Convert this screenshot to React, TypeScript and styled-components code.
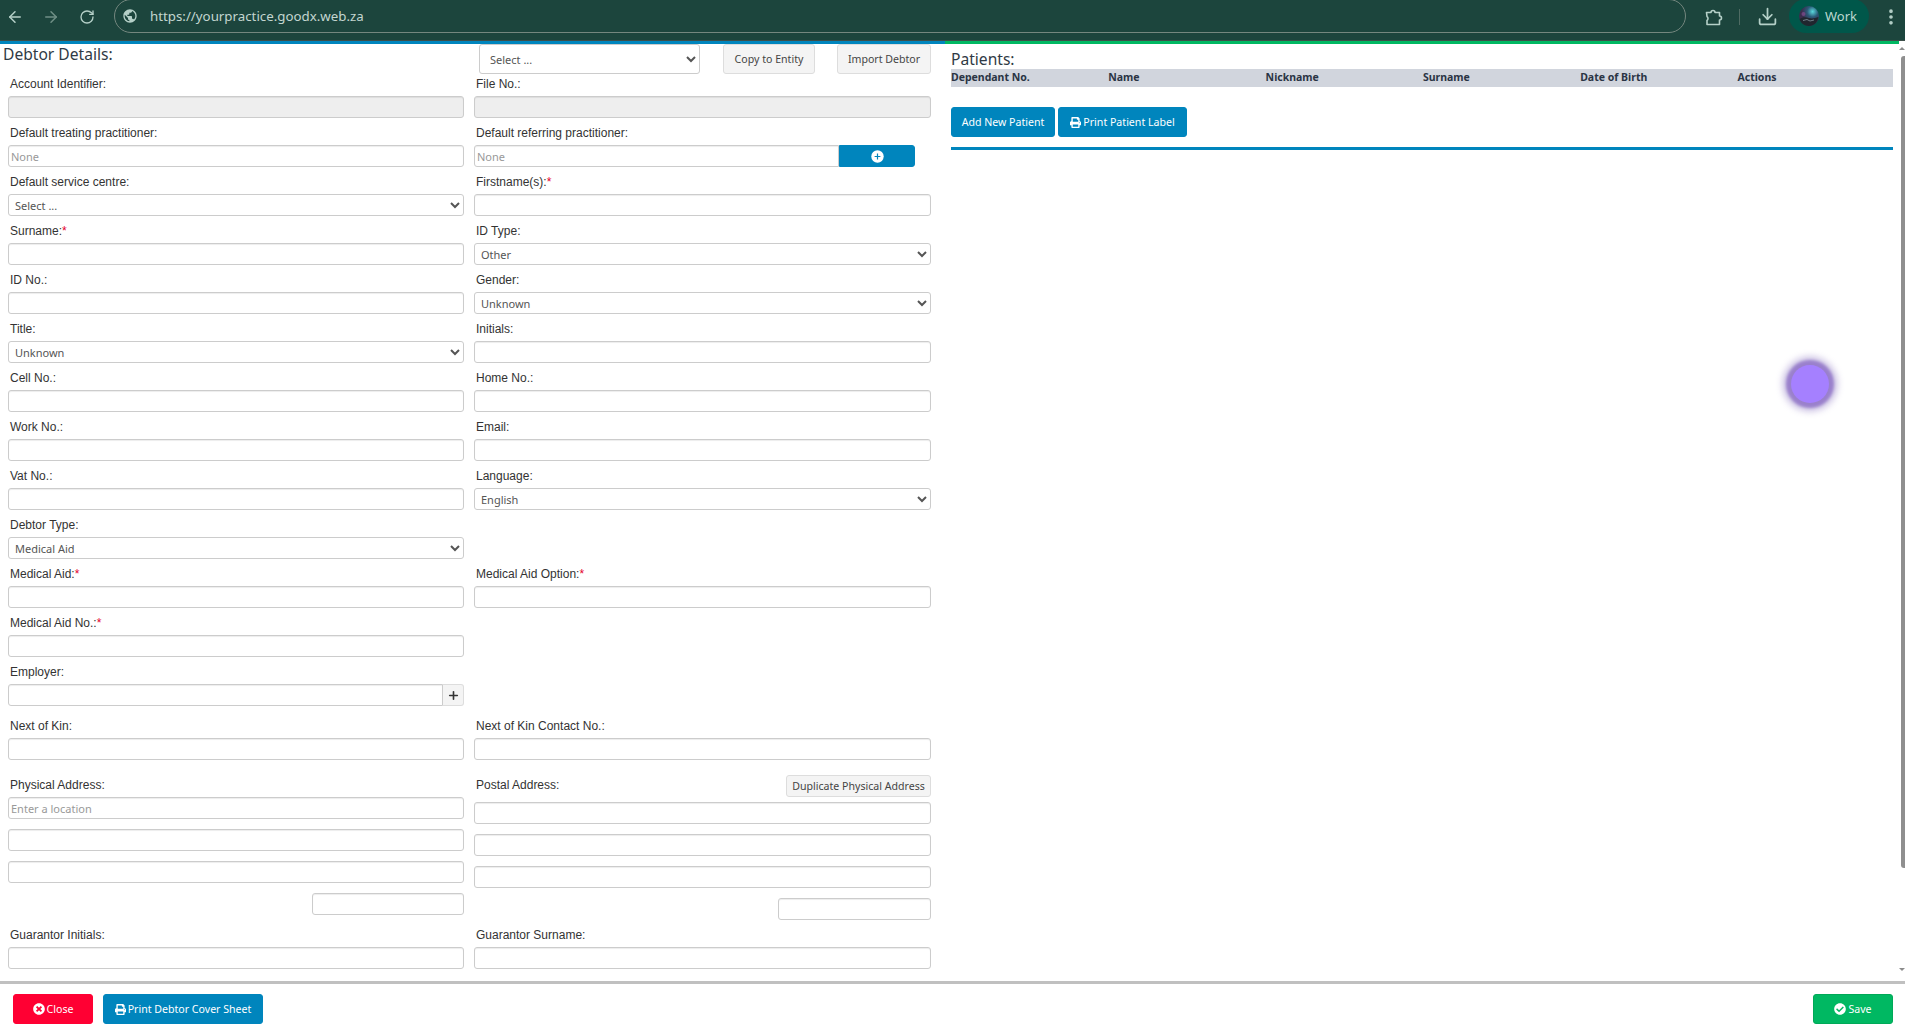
import React from 'react';
import styled, { createGlobalStyle } from 'styled-components';
import { ArrowLeft, ArrowRight, RotateCw, Download, EllipsisVertical, Plus } from 'lucide-react';
import { FaPrint, FaTimesCircle, FaCheckCircle } from 'react-icons/fa';
import { MdPublic } from 'react-icons/md';

const uiFont = `"Noto Sans", "Open Sans", sans-serif`;

const GlobalStyle = createGlobalStyle`
  html, body {
    margin: 0;
    height: 100%;
    overflow: hidden;
    background: #fff;
  }
  * {
    box-sizing: border-box;
  }
`;

const Page = styled.div`
  display: flex;
  flex-direction: column;
  height: 100vh;
  position: relative;
`;

const BrowserBar = styled.header`
  display: flex;
  align-items: flex-start;
  height: 41px;
  background: #1c453d;
  border-bottom: 1px solid #3d4f4a;
  color: #b5d0c8;
`;

const NavButton = styled.span<{ $dim?: boolean }>`
  display: flex;
  align-items: center;
  justify-content: center;
  width: 36px;
  height: 33px;
  color: ${(p) => (p.$dim ? '#6f8f86' : '#b5d0c8')};
  &:first-child {
    margin-left: -3px;
  }
`;

const Omnibox = styled.div`
  display: flex;
  align-items: center;
  width: 1572px;
  height: 34px;
  margin: -1px 9px 0 9px;
  padding-left: 7px;
  border: 1px solid #74877f;
  border-radius: 17px;
`;

const Url = styled.span`
  margin-left: 12px;
  font: 13.3px ${uiFont};
  color: #c3d6d0;
  white-space: nowrap;
`;

const ToolIcon = styled.span<{ $w: number }>`
  display: flex;
  align-items: center;
  justify-content: center;
  width: ${(p) => p.$w}px;
  height: 33px;
`;

const Divider = styled.span`
  width: 1px;
  height: 16px;
  margin: 9px 3px 0 8px;
  background: #4f6b63;
`;

const ProfilePill = styled.div`
  display: flex;
  align-items: center;
  gap: 6px;
  width: 80px;
  height: 34px;
  margin: -1px 9px 0 -2px;
  padding-left: 10px;
  border-radius: 17px;
  background: #00574a;
  font: 13px ${uiFont};
  color: #bcd8d0;
`;

const Main = styled.main`
  flex: 1;
  display: flex;
  min-height: 0;
`;

const LeftPanel = styled.section`
  width: 945px;
  padding-left: 8px;
  border-top: 3px solid #0085bd;
`;

const RightPanel = styled.section`
  width: 954px;
  padding: 5px 6px 0 6px;
  border-top: 3px solid #00b862;
`;

const TopRow = styled.div`
  display: flex;
  align-items: flex-start;
  height: 30px;
  margin-left: -5px;
`;

const Title = styled.h2`
  width: 476px;
  margin: 0;
  font: 400 15.6px/20px ${uiFont};
  color: #2f3a45;
`;

const Dropdown = styled.select<{ $wide?: boolean }>`
  width: ${(p) => (p.$wide ? '100%' : '221px')};
  height: ${(p) => (p.$wide ? '22px' : '30px')};
  margin: 0;
  padding: 0 0 0 ${(p) => (p.$wide ? '2px' : '6px')};
  border: 1px solid #ccc;
  border-radius: 3px;
  background: #fff;
  font: 11px ${uiFont};
  color: #555;
`;

const GreyButton = styled.button<{ $w: number; $h?: number; $left?: number }>`
  flex: none;
  width: ${(p) => p.$w}px;
  height: ${(p) => p.$h ?? 30}px;
  margin-left: ${(p) => p.$left ?? 0}px;
  padding: 0;
  border: 1px solid #ddd;
  border-radius: 3px;
  background: #f4f4f4;
  font: 10.6px ${uiFont};
  color: #444;
  white-space: nowrap;
`;

const TwoColumns = styled.div<{ $gapTop?: number }>`
  display: grid;
  grid-template-columns: 456px 457px;
  column-gap: 10px;
  margin-top: ${(p) => p.$gapTop ?? 0}px;
`;

const Field = styled.div`
  min-width: 0;
`;

const Label = styled.label<{ $first?: boolean }>`
  display: block;
  height: ${(p) => (p.$first ? 22 : 27)}px;
  padding: ${(p) => (p.$first ? '0' : '4px')} 0 0 2px;
  font: 12px/${(p) => (p.$first ? 21 : 23)}px "Liberation Sans", Arial, sans-serif;
  color: #333;
`;

const Required = styled.span`
  color: #e4002b;
`;

const TextInput = styled.input`
  display: block;
  width: 100%;
  height: 22px;
  padding: 0 2px;
  border: 1px solid #ccc;
  border-radius: 3px;
  background: #fff;
  box-shadow: inset 0 1px 1px rgba(0, 0, 0, 0.075);
  font: 11px ${uiFont};
  color: #555;
  &::placeholder {
    color: #999;
  }
  &:disabled {
    background: #eee;
  }
`;

const InputGroup = styled.div`
  display: flex;
`;

const GroupedInput = styled(TextInput)<{ $w?: number }>`
  flex: none;
  width: ${(p) => p.$w ?? 435}px;
  border-radius: 3px 0 0 3px;
`;

const PlusBlue = styled.button`
  width: 76px;
  height: 22px;
  padding: 0;
  border: 1px solid #0085bd;
  border-radius: 0 3px 3px 0;
  background: #0085bd;
  line-height: 0;
`;

const PlusGrey = styled.button`
  width: 21px;
  height: 22px;
  padding: 0;
  border: 1px solid #ddd;
  border-left: 0;
  border-radius: 0 3px 3px 0;
  background: #f4f4f4;
  color: #333;
  line-height: 0;
`;

const AddressStack = styled.div`
  display: flex;
  flex-direction: column;
  gap: 10px;
`;

const AddressHead = styled.div`
  display: flex;
  justify-content: space-between;
  align-items: flex-start;
  height: 22px;
  margin: 5px 0 -5px;
`;

const PostalLabel = styled(Label)`
  margin-top: -5px;
`;

const ZipInput = styled(TextInput)<{ $w: number }>`
  align-self: flex-end;
  width: ${(p) => p.$w}px;
`;

const ZeroGapLabel = styled(Label)`
  margin-bottom: -10px;
`;

const PanelTitle = styled.h2`
  margin: 0;
  font: 400 15.6px/20px ${uiFont};
  color: #2f3a45;
`;

const PatientHead = styled.div`
  display: grid;
  grid-template-columns: repeat(6, 157.3px);
  align-items: center;
  height: 18px;
  padding-bottom: 2px;
  background: #d1d5dd;
  font: 700 10.5px ${uiFont};
  color: #2a3444;
`;

const ButtonRow = styled.div`
  display: flex;
  gap: 3px;
  margin-top: 20px;
`;

const ActionButton = styled.button<{ $w: number; $bg: string; $edge?: string }>`
  display: flex;
  align-items: center;
  justify-content: center;
  gap: 2px;
  width: ${(p) => p.$w}px;
  height: 30px;
  padding: 0;
  border: 1px solid ${(p) => p.$edge ?? p.$bg};
  border-radius: 3px;
  background: ${(p) => p.$bg};
  font: 10.6px ${uiFont};
  color: #fff;
  white-space: nowrap;
`;

const BlueRule = styled.hr`
  height: 3px;
  margin: 10px 0 0;
  border: 0;
  background: #0085bd;
`;

const ScrollRail = styled.aside`
  flex: 1;
  display: flex;
  flex-direction: column;
  align-items: flex-end;
`;

const ArrowUp = styled.span`
  width: 0;
  height: 0;
  margin-top: 6px;
  border-left: 3px solid transparent;
  border-right: 3px solid transparent;
  border-bottom: 3px solid #8c8c8c;
`;

const Thumb = styled.span`
  width: 4px;
  height: 812px;
  margin-top: 6px;
  border-radius: 3px 0 0 3px;
  background: #8f8f8f;
`;

const ArrowDown = styled.span`
  width: 0;
  height: 0;
  margin-top: 100px;
  border-left: 3px solid transparent;
  border-right: 3px solid transparent;
  border-top: 3px solid #8c8c8c;
`;

const Footer = styled.footer`
  display: flex;
  align-items: flex-start;
  gap: 10px;
  height: 53px;
  padding: 10px 12px 0 13px;
  border-top: 3px solid #c0c0c0;
`;

const FooterSpacer = styled.div`
  flex: 1;
`;

const ClickDot = styled.div`
  position: absolute;
  left: 1791px;
  top: 365px;
  width: 38px;
  height: 38px;
  border-radius: 50%;
  background: #a580ff;
  box-shadow: 0 0 3px 5px #9a80cc, 0 0 6px 9px rgba(150, 130, 200, 0.45);
`;

const Avatar = () => (
  <svg width="20" height="20" viewBox="0 0 20 20">
    <defs>
      <radialGradient id="sky" cx="68%" cy="28%" r="55%">
        <stop offset="0%" stopColor="#58d8dc" />
        <stop offset="50%" stopColor="#2b5a78" />
        <stop offset="100%" stopColor="#3a2c4c" />
      </radialGradient>
    </defs>
    <circle cx="10" cy="10" r="10" fill="url(#sky)" />
    <circle cx="4.5" cy="8" r="2" fill="#7a4a88" opacity="0.8" />
    <path d="M.6 13c3-2 6-2 9.4-1s6 0 9.4-1c-.6 5-4.6 9-9.4 9s-8.400-3-9.400-7z" fill="#20262e" />
    <path d="M4 14.500l4-1 3 1.500 4-1" stroke="#6f7f88" strokeWidth="1" fill="none" />
  </svg>
);

const PuzzleIcon = () => (
  <svg width="20" height="20" viewBox="0 0 20 20" fill="none" stroke="currentColor" strokeWidth="1.600" strokeLinejoin="round">
    <path d="M3.500 5.500H8a2 2 0 0 1 4 0h4.500V9a2 2 0 0 1 0 4v4.500H4v-4a2.500 2.500 0 0 0 0-4z" />
  </svg>
);

const AddCircle = () => (
  <svg width="13" height="13" viewBox="0 0 13 13">
    <circle cx="6.500" cy="6.500" r="6.200" fill="#fff" />
    <path d="M6.500 3.600v5.800M3.600 6.500h5.800" stroke="#0085bd" strokeWidth="1.200" />
  </svg>
);

const Star = () => <Required>*</Required>;

const InputField = ({ label, required }: { label: string; required?: boolean }) => (
  <Field>
    <Label>
      {label}
      {required && <Star />}
    </Label>
    <TextInput />
  </Field>
);

const SelectField = ({ label, value }: { label: string; value: string }) => (
  <Field>
    <Label>{label}</Label>
    <Dropdown $wide defaultValue={value}>
      <option>{value}</option>
    </Dropdown>
  </Field>
);

const patientColumns = ['Dependant No.', 'Name', 'Nickname', 'Surname', 'Date of Birth', 'Actions'];

export default function App() {
  return (
    <Page>
      <GlobalStyle />
      <BrowserBar>
        <NavButton><ArrowLeft size={18} /></NavButton>
        <NavButton $dim><ArrowRight size={18} /></NavButton>
        <NavButton><RotateCw size={16} /></NavButton>
        <Omnibox>
          <MdPublic size={16} />
          <Url>https://yourpractice.goodx.web.za</Url>
        </Omnibox>
        <ToolIcon $w={36}><PuzzleIcon /></ToolIcon>
        <Divider />
        <ToolIcon $w={48}><Download size={21} /></ToolIcon>
        <ProfilePill>
          <Avatar />
          Work
        </ProfilePill>
        <ToolIcon $w={26}><EllipsisVertical size={20} strokeWidth={2.4} /></ToolIcon>
      </BrowserBar>

      <Main>
        <LeftPanel>
          <TopRow>
            <Title>Debtor Details:</Title>
            <Dropdown defaultValue="Select ...">
              <option>Select ...</option>
            </Dropdown>
            <GreyButton $w={92} $left={23}>Copy to Entity</GreyButton>
            <GreyButton $w={94} $left={22}>Import Debtor</GreyButton>
          </TopRow>

          <TwoColumns>
            <Field>
              <Label $first>Account Identifier:</Label>
              <TextInput disabled />
            </Field>
            <Field>
              <Label $first>File No.:</Label>
              <TextInput disabled />
            </Field>
          </TwoColumns>

          <TwoColumns>
            <Field>
              <Label>Default treating practitioner:</Label>
              <TextInput placeholder="None" />
            </Field>
            <Field>
              <Label>Default referring practitioner:</Label>
              <InputGroup>
                <GroupedInput $w={365} placeholder="None" />
                <PlusBlue><AddCircle /></PlusBlue>
              </InputGroup>
            </Field>
          </TwoColumns>

          <TwoColumns>
            <SelectField label="Default service centre:" value="Select ..." />
            <InputField label="Firstname(s):" required />
          </TwoColumns>
          <TwoColumns>
            <InputField label="Surname:" required />
            <SelectField label="ID Type:" value="Other" />
          </TwoColumns>
          <TwoColumns>
            <InputField label="ID No.:" />
            <SelectField label="Gender:" value="Unknown" />
          </TwoColumns>
          <TwoColumns>
            <SelectField label="Title:" value="Unknown" />
            <InputField label="Initials:" />
          </TwoColumns>
          <TwoColumns>
            <InputField label="Cell No.:" />
            <InputField label="Home No.:" />
          </TwoColumns>
          <TwoColumns>
            <InputField label="Work No.:" />
            <InputField label="Email:" />
          </TwoColumns>
          <TwoColumns>
            <InputField label="Vat No.:" />
            <SelectField label="Language:" value="English" />
          </TwoColumns>
          <TwoColumns>
            <SelectField label="Debtor Type:" value="Medical Aid" />
          </TwoColumns>
          <TwoColumns>
            <InputField label="Medical Aid:" required />
            <InputField label="Medical Aid Option:" required />
          </TwoColumns>
          <TwoColumns>
            <InputField label="Medical Aid No.:" required />
          </TwoColumns>
          <TwoColumns>
            <Field>
              <Label>Employer:</Label>
              <InputGroup>
                <GroupedInput />
                <PlusGrey><Plus size={13} strokeWidth={3} /></PlusGrey>
              </InputGroup>
            </Field>
          </TwoColumns>
          <TwoColumns $gapTop={5}>
            <InputField label="Next of Kin:" />
            <InputField label="Next of Kin Contact No.:" />
          </TwoColumns>

          <TwoColumns $gapTop={10}>
            <AddressStack>
              <ZeroGapLabel>Physical Address:</ZeroGapLabel>
              <TextInput placeholder="Enter a location" />
              <TextInput />
              <TextInput />
              <ZipInput $w={152} />
            </AddressStack>
            <AddressStack>
              <AddressHead>
                <PostalLabel>Postal Address:</PostalLabel>
                <GreyButton $w={145} $h={22}>Duplicate Physical Address</GreyButton>
              </AddressHead>
              <TextInput />
              <TextInput />
              <TextInput />
              <ZipInput $w={153} />
            </AddressStack>
          </TwoColumns>

          <TwoColumns>
            <InputField label="Guarantor Initials:" />
            <InputField label="Guarantor Surname:" />
          </TwoColumns>
        </LeftPanel>

        <RightPanel>
          <PanelTitle>Patients:</PanelTitle>
          <PatientHead>
            {patientColumns.map((name) => (
              <span key={name}>{name}</span>
            ))}
          </PatientHead>
          <ButtonRow>
            <ActionButton $w={104} $bg="#0085bd">Add New Patient</ActionButton>
            <ActionButton $w={129} $bg="#0085bd"><FaPrint size={11} />Print Patient Label</ActionButton>
          </ButtonRow>
          <BlueRule />
        </RightPanel>

        <ScrollRail>
          <ArrowUp />
          <Thumb />
          <ArrowDown />
        </ScrollRail>
      </Main>

      <Footer>
        <ActionButton $w={80} $bg="#ff0033"><FaTimesCircle size={12} />Close</ActionButton>
        <ActionButton $w={160} $bg="#0085bd"><FaPrint size={11} />Print Debtor Cover Sheet</ActionButton>
        <FooterSpacer />
        <ActionButton $w={80} $bg="#00b862" $edge="#00a958"><FaCheckCircle size={12} />Save</ActionButton>
      </Footer>

      <ClickDot />
    </Page>
  );
}
